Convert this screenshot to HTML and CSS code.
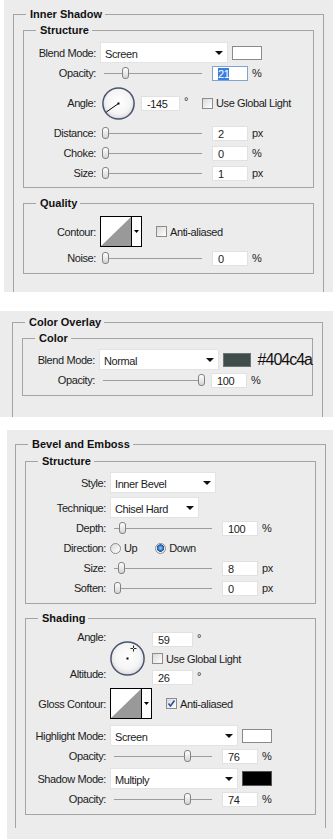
FILE: index.html
```html
<!DOCTYPE html>
<html lang="en">

<head>
    <meta charset="UTF-8">
    <meta name="viewport" content="width=device-width, initial-scale=1.0">
    <title>Layer Style</title>
    <link rel="stylesheet" href="styles.css">
</head>

<body>

    <!-- Inner Shadow -->
    <div class="panel panel-shadow">
        <fieldset class="group">
            <legend>Inner Shadow</legend>
            <fieldset class="box box-first">
                <legend>Structure</legend>
                <div class="row row-select">
                    <span class="label">Blend Mode:</span>
                    <div class="select"><span>Screen</span><i class="arrow"></i></div>
                    <span class="swatch"></span>
                </div>
                <div class="row">
                    <span class="label">Opacity:</span>
                    <div class="slider"><i class="thumb" style="left: 22px"></i></div>
                    <span class="field focused"><span class="selected">21</span></span>
                    <span class="unit">%</span>
                </div>
                <div class="row row-dial">
                    <span class="label">Angle:</span>
                    <svg class="dial" width="33" height="33" viewBox="0 0 33 33">
                        <defs>
                            <radialGradient id="dialFillA" cx="50%" cy="45%" r="55%">
                                <stop offset="0" stop-color="#ffffff"/>
                                <stop offset="0.7" stop-color="#f4f4f4"/>
                                <stop offset="1" stop-color="#d9d9d9"/>
                            </radialGradient>
                        </defs>
                        <circle cx="16.5" cy="16.5" r="15.6" fill="url(#dialFillA)" stroke="#4a5470" stroke-width="1.5"/>
                        <line x1="16.5" y1="16.5" x2="4.2" y2="25.1" stroke="#000" stroke-width="1"/>
                        <rect x="15.5" y="15.5" width="2" height="2" fill="#000"/>
                    </svg>
                    <span class="field field-angle">-145</span>
                    <span class="degree">°</span>
                    <span class="check check-global"><i class="checkbox"></i>Use Global Light</span>
                </div>
                <div class="row">
                    <span class="label">Distance:</span>
                    <div class="slider"><i class="thumb" style="left: 2px"></i></div>
                    <span class="field">2</span>
                    <span class="unit">px</span>
                </div>
                <div class="row">
                    <span class="label">Choke:</span>
                    <div class="slider"><i class="thumb" style="left: 2px"></i></div>
                    <span class="field">0</span>
                    <span class="unit">%</span>
                </div>
                <div class="row">
                    <span class="label">Size:</span>
                    <div class="slider"><i class="thumb" style="left: 2px"></i></div>
                    <span class="field">1</span>
                    <span class="unit">px</span>
                </div>
            </fieldset>
            <fieldset class="box">
                <legend>Quality</legend>
                <div class="row row-contour">
                    <span class="label">Contour:</span>
                    <svg class="contour" width="42" height="31" viewBox="0 0 42 31">
                        <rect x="0.5" y="0.5" width="41" height="30" fill="#fff" stroke="#000"/>
                        <polygon points="1,30 31,1 31,30" fill="#999"/>
                        <line x1="31.5" y1="0" x2="31.5" y2="31" stroke="#000"/>
                        <polygon points="34,14 39,14 36.5,17" fill="#000"/>
                    </svg>
                    <span class="check check-contour"><i class="checkbox"></i>Anti-aliased</span>
                </div>
                <div class="row">
                    <span class="label">Noise:</span>
                    <div class="slider"><i class="thumb" style="left: 2px"></i></div>
                    <span class="field">0</span>
                    <span class="unit">%</span>
                </div>
            </fieldset>
        </fieldset>
    </div>

    <!-- Color Overlay -->
    <div class="panel panel-overlay">
        <fieldset class="group">
            <legend>Color Overlay</legend>
            <fieldset class="box">
                <legend>Color</legend>
                <div class="row row-select">
                    <span class="label">Blend Mode:</span>
                    <div class="select"><span>Normal</span><i class="arrow"></i></div>
                    <span class="swatch swatch-overlay"></span>
                    <span class="hex">#404c4a</span>
                </div>
                <div class="row">
                    <span class="label">Opacity:</span>
                    <div class="slider"><i class="thumb" style="left: 99px"></i></div>
                    <span class="field">100</span>
                    <span class="unit">%</span>
                </div>
            </fieldset>
        </fieldset>
    </div>

    <!-- Bevel and Emboss -->
    <div class="panel panel-bevel">
        <fieldset class="group">
            <legend>Bevel and Emboss</legend>
            <fieldset class="box">
                <legend>Structure</legend>
                <div class="row row-select">
                    <span class="label">Style:</span>
                    <div class="select select-style"><span>Inner Bevel</span><i class="arrow"></i></div>
                </div>
                <div class="row row-select row-technique">
                    <span class="label">Technique:</span>
                    <div class="select select-technique"><span>Chisel Hard</span><i class="arrow"></i></div>
                </div>
                <div class="row">
                    <span class="label">Depth:</span>
                    <div class="slider"><i class="thumb" style="left: 9px"></i></div>
                    <span class="field">100</span>
                    <span class="unit">%</span>
                </div>
                <div class="row">
                    <span class="label">Direction:</span>
                    <span class="check"><i class="radio"></i>Up</span>
                    <span class="check check-down"><i class="radio on"></i>Down</span>
                </div>
                <div class="row">
                    <span class="label">Size:</span>
                    <div class="slider"><i class="thumb" style="left: 8px"></i></div>
                    <span class="field">8</span>
                    <span class="unit">px</span>
                </div>
                <div class="row">
                    <span class="label">Soften:</span>
                    <div class="slider"><i class="thumb" style="left: 4px"></i></div>
                    <span class="field">0</span>
                    <span class="unit">px</span>
                </div>
            </fieldset>
            <fieldset class="box box-shading">
                <legend>Shading</legend>
                <div class="light">
                    <div class="light-labels">
                        <span class="label">Angle:</span>
                        <span class="label">Altitude:</span>
                    </div>
                    <svg class="dial" width="35" height="35" viewBox="0 0 35 35">
                        <defs>
                            <radialGradient id="dialFillB" cx="50%" cy="45%" r="55%">
                                <stop offset="0" stop-color="#ffffff"/>
                                <stop offset="0.7" stop-color="#f4f4f4"/>
                                <stop offset="1" stop-color="#d9d9d9"/>
                            </radialGradient>
                        </defs>
                        <circle cx="17.5" cy="17.5" r="16.6" fill="url(#dialFillB)" stroke="#4a5470" stroke-width="1.5"/>
                        <rect x="16.5" y="16.5" width="2" height="2" fill="#000"/>
                        <path d="M23.5 4.5v2.5M23.5 8v2.5M20.5 7.5h2.5M24 7.5h2.5" stroke="#222" stroke-width="1"/>
                    </svg>
                    <div class="light-fields">
                        <span class="pair"><span class="field field-light">59</span><span class="degree">°</span></span>
                        <span class="check"><i class="checkbox"></i>Use Global Light</span>
                        <span class="pair"><span class="field field-light">26</span><span class="degree">°</span></span>
                    </div>
                </div>
                <div class="row row-contour row-gloss">
                    <span class="label">Gloss Contour:</span>
                    <svg class="contour" width="42" height="31" viewBox="0 0 42 31">
                        <rect x="0.5" y="0.5" width="41" height="30" fill="#fff" stroke="#000"/>
                        <polygon points="1,30 31,1 31,30" fill="#999"/>
                        <line x1="31.5" y1="0" x2="31.5" y2="31" stroke="#000"/>
                        <polygon points="34,14 39,14 36.5,17" fill="#000"/>
                    </svg>
                    <span class="check check-contour">
                        <i class="checkbox">
                            <svg width="11" height="11" viewBox="0 0 11 11">
                                <path d="M2.5 5.5l2 2.5 4-5.5" fill="none" stroke="#2f4f9a" stroke-width="1.6"/>
                            </svg>
                        </i>Anti-aliased
                    </span>
                </div>
                <div class="row row-select row-highlight">
                    <span class="label">Highlight Mode:</span>
                    <div class="select"><span>Screen</span><i class="arrow"></i></div>
                    <span class="swatch"></span>
                </div>
                <div class="row">
                    <span class="label">Opacity:</span>
                    <div class="slider"><i class="thumb" style="left: 74px"></i></div>
                    <span class="field">76</span>
                    <span class="unit">%</span>
                </div>
                <div class="row row-select row-shadow">
                    <span class="label">Shadow Mode:</span>
                    <div class="select"><span>Multiply</span><i class="arrow"></i></div>
                    <span class="swatch swatch-black"></span>
                </div>
                <div class="row">
                    <span class="label">Opacity:</span>
                    <div class="slider"><i class="thumb" style="left: 74px"></i></div>
                    <span class="field">74</span>
                    <span class="unit">%</span>
                </div>
            </fieldset>
        </fieldset>
    </div>

</body>

</html>
```

FILE: styles.css
```css
/* Page */
body {
    margin: 0;
    background-color: #fff;
    font-family: "Liberation Sans", Arial, sans-serif;
    font-size: 11px;
    letter-spacing: -0.4px;
    color: #1c1c1c;
}

/* Grey dialog panels */
.panel {
    background-color: #ececec;
}

.panel-shadow {
    margin-left: 4px;
    padding: 8px 9px 0 9px;
}

.panel-overlay {
    margin-top: 19px;
    padding: 5px 10px 0 12px;
}

.panel-bevel {
    margin: 13px 0 0 7px;
    padding: 8px 7px 11px 8px;
}

/* Frames */
fieldset {
    margin: 0;
    min-width: 0;
    border: 1px solid #a4a4a4;
}

legend {
    font-weight: bold;
    line-height: 13px;
    padding: 0 3px 0 4px;
    letter-spacing: 0;
    color: #111;
}

.group {
    border-bottom: none;
    padding: 3px 9px 18px 9px;
}

.group > legend {
    margin-left: 3px;
}

.box {
    padding: 5px 0 5px 0;
}

.box > legend {
    margin-left: 12px;
}

.box + .box {
    margin-top: 9px;
}

.box-first {
    padding-bottom: 4px;
}

.panel-overlay .group {
    padding-bottom: 21px;
}

.panel-overlay .box {
    padding-top: 4px;
}

.panel-bevel .group {
    padding-top: 4px;
    padding-bottom: 13px;
}

.panel-bevel .box {
    padding-top: 4px;
}

.panel-bevel .box + .box {
    margin-top: 8px;
    padding-top: 5px;
}

/* Rows */
.row {
    display: flex;
    align-items: center;
    gap: 4px;
    height: 20px;
}

.label {
    width: 72px;
    flex-shrink: 0;
    text-align: right;
    white-space: nowrap;
}

.panel-bevel .label {
    width: 80px;
}

.row-select {
    height: 21px;
}

.row-dial {
    height: 40px;
}

.row-contour {
    height: 33px;
}

.row-technique {
    margin-top: 4px;
}

.row-gloss {
    height: 35px;
}

.row-highlight {
    margin-top: 4px;
}

.row-shadow {
    margin-top: 2px;
}

/* Drop-down */
.select {
    display: flex;
    align-items: center;
    justify-content: space-between;
    box-sizing: border-box;
    width: 128px;
    height: 21px;
    padding: 2px 4px 0 4px;
    background-color: #fff;
    border: 1px solid #e3e3e3;
}

.select-style {
    width: 106px;
}

.select-technique {
    width: 89px;
}

.arrow {
    width: 0;
    height: 0;
    margin-top: -1px;
    border-left: 4px solid transparent;
    border-right: 4px solid transparent;
    border-top: 4px solid #111;
}

/* Colour swatches */
.swatch {
    box-sizing: border-box;
    width: 30px;
    height: 14px;
    background-color: #fff;
    border: 1px solid #8a8a8a;
}

.swatch-overlay {
    background-color: #404c4a;
    border-color: #6d7471;
}

.swatch-black {
    height: 15px;
    background-color: #000;
    border-color: #555;
}

.hex {
    margin-left: 3px;
    font-size: 16px;
    letter-spacing: -1px;
    color: #111;
    white-space: nowrap;
}

/* Slider */
.slider {
    position: relative;
    flex-shrink: 0;
    width: 108px;
    height: 12px;
    background: linear-gradient(#9c9c9c, #9c9c9c) no-repeat 4px 6px / 98px 1px;
}

.thumb {
    position: absolute;
    top: 0;
    box-sizing: border-box;
    width: 7px;
    height: 12px;
    border: 1px solid #828282;
    border-radius: 3px 3px 3px 3px;
    background: linear-gradient(#ffffff, #d4d4d4);
}

/* Number fields */
.field {
    box-sizing: border-box;
    flex-shrink: 0;
    width: 36px;
    height: 15px;
    padding: 1px 0 0 5px;
    line-height: 13px;
    background-color: #fff;
    border: 1px solid #e1e1e1;
}

.field.focused {
    border-color: #7ea4d4;
}

.selected {
    background-color: #3a7ee0;
    color: #fff;
}

.field-angle {
    width: 39px;
    margin-left: 2px;
}

.field-light {
    width: 41px;
}

.unit {
    color: #222;
}

.degree {
    margin-top: -4px;
}

.pair .degree {
    margin-top: 0;
}

/* Dial */
.dial {
    flex-shrink: 0;
}

.row-dial .dial {
    margin-left: 2px;
}

/* Checkboxes and radios */
.check {
    display: inline-flex;
    align-items: center;
    gap: 3px;
    white-space: nowrap;
}

.check-global {
    margin-left: 10px;
}

.check-contour {
    margin-left: 10px;
}

.check-down {
    margin-left: 14px;
}

.checkbox {
    box-sizing: border-box;
    width: 11px;
    height: 11px;
    border: 1px solid #8c8c8c;
    background: linear-gradient(135deg, #d9d9d9, #ffffff);
}

.checkbox svg {
    display: block;
    margin: -1px;
}

.radio {
    box-sizing: border-box;
    width: 11px;
    height: 11px;
    border: 1px solid #8c8c8c;
    border-radius: 50%;
    background: linear-gradient(135deg, #d9d9d9, #ffffff);
}

.radio.on {
    background: radial-gradient(circle at 50% 45%, #9fd4ff 0, #2a76c8 2.5px, #1f4f8c 3.5px, #f2f2f2 4px);
}

.contour {
    flex-shrink: 0;
}

/* Angle and altitude block */
.light {
    display: flex;
    height: 56px;
}

.light-labels {
    display: flex;
    flex-direction: column;
    justify-content: space-between;
    padding-bottom: 4px;
}

.light-labels .label {
    line-height: 15px;
}

.light .dial {
    align-self: center;
    margin: 0 7px 0 4px;
}

.light-fields {
    display: flex;
    flex-direction: column;
    justify-content: space-between;
    padding: 2px 0 1px 0;
}

.pair {
    display: flex;
    gap: 4px;
}
```
